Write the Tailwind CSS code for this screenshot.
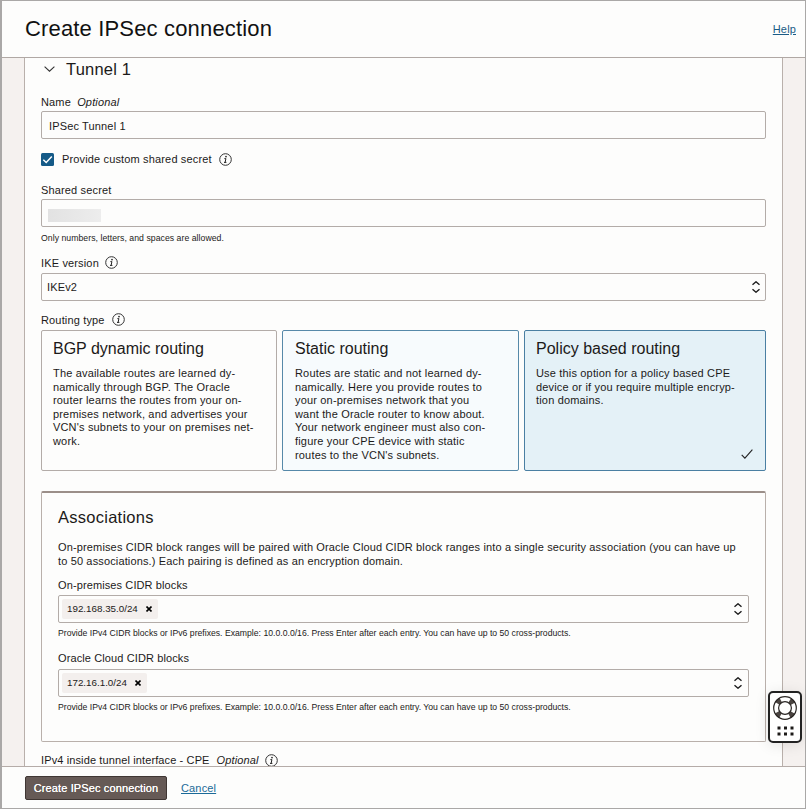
<!DOCTYPE html>
<html lang="en">
<head>
<meta charset="utf-8">
<title>Create IPSec connection</title>
<script src="https://cdn.jsdelivr.net/npm/@tailwindcss/browser@4"></script>
</head>
<body class="bg-[#fdfdfc]">
<svg class="hidden">
  <symbol id="info" viewBox="0 0 13 13"><circle cx="6.5" cy="6.5" r="5.8" fill="none" stroke="#333" stroke-width="1"/><path d="M5.4 5.6h1.5l-.8 3.8h1.3M5 9.4h1.4" fill="none" stroke="#222" stroke-width="1"/><circle cx="7" cy="3.6" r=".85" fill="#222"/></symbol>
  <symbol id="updown" viewBox="0 0 8 12"><path d="M.5 3.700 4 .8l3.500 2.900M.5 8.300 4 11.200l3.500-2.900" fill="none" stroke="#1a1a1a" stroke-width="1.4"/></symbol>
  <symbol id="close" viewBox="0 0 6 6"><path d="M.5.5 5.5 5.5M5.500.5.5 5.500" stroke="#000" stroke-width="1.6"/></symbol>
</svg>
<div class="flex h-[809px] w-[806px] flex-col overflow-hidden border border-l-2 border-[#aaa8a7] bg-[#fdfdfc] font-['Liberation_Sans',Arial,sans-serif] text-[11px] leading-[14px] tracking-[0.15px] whitespace-nowrap text-[#1c1a19]">
  <header class="flex h-[57px] shrink-0 items-center justify-between border-b border-[#b0a8a4] pr-[9px] pl-[23px]">
    <h1 class="text-[22px] leading-7 tracking-[0.16px] text-[#111]">Create IPSec connection</h1>
    <a class="text-[#1b5c86] underline">Help</a>
  </header>
  <main class="h-[708px] shrink-0 overflow-hidden bg-[#f5f1ef] pr-[22px] pl-[22px]">
    <div class="h-[740px] border-x border-[#b9b0ab] bg-[#fdfdfc] px-4">
      <div class="flex h-6 items-center pb-[2px] pl-[3px]">
        <svg class="h-[6px] w-[11px]" viewBox="0 0 11 6"><path d="M.6.6 5.5 5.2 10.4.6" fill="none" stroke="#333" stroke-width="1.1"/></svg>
        <h2 class="ml-[11px] text-[16.5px] tracking-[0.2px]">Tunnel 1</h2>
      </div>
      <div class="mt-[13px] h-4">Name <i class="ml-[3px]">Optional</i></div>
      <div class="flex h-7 items-center rounded-[2px] border border-[#b3aca8] pt-px pl-[7px]">IPSec Tunnel 1</div>
      <div class="mt-[13px] flex h-[14px] items-center">
        <svg class="h-[13px] w-[13px]" viewBox="0 0 13 13"><rect width="13" height="13" rx="1.5" fill="#155a87"/><path d="M2.3 6.700 5.200 9.500 10.800 3.600" fill="none" stroke="#fff" stroke-width="1.5"/></svg>
        <span class="ml-2">Provide custom shared secret</span>
        <svg class="ml-[7px] h-[13px] w-[13px]"><use href="#info"/></svg>
      </div>
      <div class="mt-[17px] h-4">Shared secret</div>
      <div class="flex h-7 items-center rounded-[2px] border border-[#b3aca8] pt-1 pl-[6px]"><div class="h-[13px] w-[53px] bg-linear-to-r from-[#e2e2e2] to-[#ededed]"></div></div>
      <div class="mt-1 h-[14px] text-[8.7px] tracking-[0.04px]">Only numbers, letters, and spaces are allowed.</div>
      <div class="mt-[11px] flex h-[17px] items-start">IKE version <svg class="ml-[6px] h-[13px] w-[13px]"><use href="#info"/></svg></div>
      <div class="flex h-7 items-center justify-between rounded-[2px] border border-[#b3aca8] pr-[5px] pl-[5px]">IKEv2 <svg class="h-3 w-2"><use href="#updown"/></svg></div>
      <div class="mt-[12px] flex h-[17px] items-start">Routing type <svg class="ml-[7px] h-[13px] w-[13px]"><use href="#info"/></svg></div>
      <div class="flex h-[141px] gap-[5px] leading-[13.6px] tracking-[0.17px]">
        <section class="w-[236px] rounded-[2px] border border-[#b3aca8] pt-[9px] pl-[11px]">
          <h3 class="mb-[9px] text-[16px] leading-[18px] tracking-[0px]">BGP dynamic routing</h3>
          <p>The available routes are learned dy-<br>namically through BGP. The Oracle<br>router learns the routes from your on-<br>premises network, and advertises your<br>VCN's subnets to your on premises net-<br>work.</p>
        </section>
        <section class="w-[237px] rounded-[2px] border border-[#5689a9] bg-[#f7fbfd] pt-[9px] pl-[12px]">
          <h3 class="mb-[9px] text-[16px] leading-[18px] tracking-[0px]">Static routing</h3>
          <p>Routes are static and not learned dy-<br>namically. Here you provide routes to<br>your on-premises network that you<br>want the Oracle router to know about.<br>Your network engineer must also con-<br>figure your CPE device with static<br>routes to the VCN's subnets.</p>
        </section>
        <section class="flex w-[242px] flex-col rounded-[2px] border border-[#4a7fa2] bg-[#e4f1f7] pt-[9px] pl-[11px]">
          <h3 class="mb-[9px] text-[16px] leading-[18px] tracking-[0px]">Policy based routing</h3>
          <p>Use this option for a policy based CPE<br>device or if you require multiple encryp-<br>tion domains.</p>
          <svg class="mt-auto mr-[12px] mb-[11px] h-[10px] w-[12px] self-end" viewBox="0 0 12 10"><path d="M.7 5.8 3.9 9.2 11.4.7" fill="none" stroke="#222" stroke-width="1.1"/></svg>
        </section>
      </div>
      <section class="mt-5 h-[251px] rounded-[2px] border border-t-2 border-[#b9b0ab] border-t-[#9b8f89] px-4 pt-[14px]">
        <h3 class="text-[16.5px] leading-5 tracking-[0.26px]">Associations</h3>
        <p class="mt-[14px] leading-[13.65px] tracking-[0.142px]">On-premises CIDR block ranges will be paired with Oracle Cloud CIDR block ranges into a single security association (you can have up<br>to 50 associations.) Each pairing is defined as an encryption domain.</p>
        <div class="mt-[10px] h-[17px] tracking-[0.11px]">On-premises CIDR blocks</div>
        <div class="flex h-7 items-center justify-between rounded-[2px] border border-[#b3aca8] pr-[6px] pl-[3px]">
          <span class="flex h-5 w-[96px] items-center justify-between rounded-[2px] bg-[#f3efed] pr-[6px] pl-[5px] text-[9.8px] tracking-[0px]">192.168.35.0/24 <svg class="h-[6px] w-[6px]"><use href="#close"/></svg></span>
          <svg class="h-3 w-2"><use href="#updown"/></svg>
        </div>
        <div class="mt-[3px] h-[14px] text-[8.67px] tracking-[0px]">Provide IPv4 CIDR blocks or IPv6 prefixes. Example: 10.0.0.0/16. Press Enter after each entry. You can have up to 50 cross-products.</div>
        <div class="mt-[11px] h-[18px] tracking-[0.11px]">Oracle Cloud CIDR blocks</div>
        <div class="flex h-7 items-center justify-between rounded-[2px] border border-[#b3aca8] pr-[6px] pl-[3px]">
          <span class="flex h-5 w-[85px] items-center justify-between rounded-[2px] bg-[#f3efed] pr-[6px] pl-[5px] text-[9.8px] tracking-[0px]">172.16.1.0/24 <svg class="h-[6px] w-[6px]"><use href="#close"/></svg></span>
          <svg class="h-3 w-2"><use href="#updown"/></svg>
        </div>
        <div class="mt-[3px] h-[14px] text-[8.67px] tracking-[0px]">Provide IPv4 CIDR blocks or IPv6 prefixes. Example: 10.0.0.0/16. Press Enter after each entry. You can have up to 50 cross-products.</div>
      </section>
      <div class="mt-[11px] flex tracking-[0.12px]">IPv4 inside tunnel interface - CPE <i class="ml-[7px]">Optional</i> <svg class="mt-px ml-[6px] h-[13px] w-[13px]"><use href="#info"/></svg></div>
    </div>
  </main>
  <footer class="flex grow items-center border-t border-[#b5aca8] pl-[23px]">
    <button class="h-6 w-[142px] rounded-[2px] border border-[#3f3633] bg-[#665a56] text-white tracking-[0.13px] [text-shadow:0_0_0.6px_#fff]">Create IPSec connection</button>
    <a class="ml-[14px] text-[#1b6a98] underline">Cancel</a>
  </footer>
</div>
<!-- Floating support widget -->
<aside class="absolute top-[691px] left-[768px] flex h-[52px] w-[34px] flex-col items-center rounded-[5px] border-2 border-[#222] bg-white pt-[3px] shadow-[0_2px_14px_rgba(0,0,0,0.1)]">
  <svg class="h-6 w-6 shrink-0" viewBox="0 0 24 24"><circle cx="12" cy="12" r="9" fill="none" stroke="#4a4441" stroke-width="5.2" stroke-dasharray="4.7 9.437" stroke-dashoffset="-4.72"/><g fill="none" stroke="#2a2624" stroke-width="1.2"><circle cx="12" cy="12" r="11.3"/><circle cx="12" cy="12" r="6.4"/></g></svg>
  <svg class="mt-[6px] h-[10px] w-[17px] shrink-0" viewBox="0 0 17 10" fill="#1d1a19"><path d="M.5.5h3v3h-3zM7 .5h3v3H7zM13.500.5h3v3h-3zM.5 6.500h3v3h-3zM7 6.500h3v3H7zM13.500 6.500h3v3h-3z"/></svg>
</aside>
</body>
</html>
